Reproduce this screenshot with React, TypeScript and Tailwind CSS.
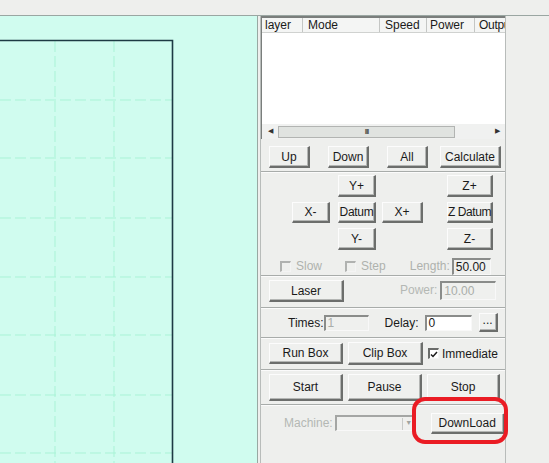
import type { ReactNode } from 'react';

const FONT = { fontFamily: '"Liberation Sans", Arial, sans-serif' };

function Btn({ children, className = '' }: { children: ReactNode; className?: string }) {
  return (
    <div
      className={`flex items-center justify-center whitespace-nowrap border-t border-l border-r-2 border-b-2 border-t-[#fcfcfc] border-l-[#fcfcfc] border-r-[#6c6e6c] border-b-[#6c6e6c] bg-[#eff0ee] text-[12px] leading-none text-[#1a1a1a] shadow-[inset_-1px_-1px_0_#b4b6b4] ${className}`}
    >
      {children}
    </div>
  );
}

function Field({ value, className = '', white = false, dim = false }: { value: string; className?: string; white?: boolean; dim?: boolean }) {
  return (
    <div
      className={`flex items-center border-t-2 border-l-2 border-r border-b border-t-[#8a8c8a] border-l-[#8a8c8a] border-r-[#f8f8f8] border-b-[#f8f8f8] pl-[2px] text-[12px] leading-none ${white ? 'bg-white' : 'bg-[#eff0ee]'} ${dim ? 'text-[#a9ada9]' : 'text-[#1a1a1a]'} ${className}`}
    >
      {value}
    </div>
  );
}

function Check({ checked = false, disabled = false }: { checked?: boolean; disabled?: boolean }) {
  return (
    <div
      className={`flex h-[11px] w-[11px] items-center justify-center border-t-2 border-l-2 border-r border-b ${disabled ? 'border-t-[#b0b2b0] border-l-[#b0b2b0] border-r-[#f4f4f4] border-b-[#f4f4f4] bg-[#eff0ee]' : 'border-t-[#6a6c6a] border-l-[#6a6c6a] border-r-[#f4f4f4] border-b-[#f4f4f4] bg-white'}`}
    >
      {checked ? (
        <svg width="8" height="7" viewBox="0 0 8 7">
          <path d="M1 3.5 L3 5.5 L7 1" stroke="#1a1a1a" strokeWidth="1.5" fill="none" />
        </svg>
      ) : null}
    </div>
  );
}

function Section({ children, className = '' }: { children: ReactNode; className?: string }) {
  return <div className={`border-b border-[#a8acaa] shadow-[0_1px_0_#fbfbfb] ${className}`}>{children}</div>;
}

function CanvasDrawing() {
  const rows = [84, 142, 202, 261, 319, 379, 437];
  return (
    <svg width="257" height="447" className="block">
      {rows.map((y) => (
        <line key={y} x1="0" y1={y} x2="172" y2={y} stroke="#a9f3d6" strokeWidth="1" strokeDasharray="11 4" />
      ))}
      {[55, 114].map((x) => (
        <line key={x} x1={x} y1="25" x2={x} y2="447" stroke="#a9f3d6" strokeWidth="1" strokeDasharray="11 4" />
      ))}
      <path d="M0 24.5 H172.5 V447" stroke="#1d3a44" strokeWidth="1.6" fill="none" />
    </svg>
  );
}

export default function App() {
  return (
    <div className="relative h-[463px] w-[549px] overflow-hidden bg-[#eeefed]" style={FONT}>
      <div className="h-[16px] border-b border-[#9aa6a2]" />
      <div className="flex h-[447px]">
        <div className="w-[258px] border-r border-[#98a8a2] bg-[#d0fcef]">
          <CanvasDrawing />
        </div>

        <div className="flex w-[291px] flex-col pl-[2px]">
          <div className="flex w-[246px] flex-1 flex-col border-l border-r border-[#b8bcba]">
            <div className="h-[108px] border-t-2 border-l border-[#7a7e7c] bg-white">
              <div className="flex h-[15px] border-b border-[#d0d2d0] bg-[#f4f5f4] text-[12px] leading-[15px] text-[#1a1a1a]">
                <div className="w-[41px] border-r border-[#c4c6c4] pl-[3px]">layer</div>
                <div className="w-[77px] border-r border-[#c4c6c4] pl-[5px]">Mode</div>
                <div className="w-[47px] border-r border-[#c4c6c4] pl-[5px]">Speed</div>
                <div className="w-[48px] border-r border-[#c4c6c4] pl-[3px]">Power</div>
                <div className="min-w-0 flex-1 overflow-hidden whitespace-nowrap pl-[4px] tracking-[-0.3px]">Outpu</div>
              </div>
            </div>
            <div className="flex h-[15px] items-center border-l border-[#7a7e7c] bg-[#f0f1f0]">
              <div className="flex w-[16px] justify-center text-[7px] text-[#333]">◀</div>
              <div className="flex h-[12px] w-[177px] items-center justify-center border border-[#b2b4b2] bg-[#e0e3e0] text-[8px] font-bold tracking-[-1px] text-[#555]">
                III
              </div>
              <div className="flex-1" />
              <div className="flex w-[16px] justify-center text-[7px] text-[#333]">▶</div>
            </div>

            <Section className="flex h-[33px] items-start pt-[7px]">
              <Btn className="ml-[8px] h-[22px] w-[41px]">Up</Btn>
              <Btn className="ml-[18px] h-[22px] w-[41px]">Down</Btn>
              <Btn className="ml-[18px] h-[22px] w-[41px]">All</Btn>
              <Btn className="ml-[12px] h-[22px] w-[61px]">Calculate</Btn>
            </Section>

            <Section className="h-[104px] pt-[3px]">
              <div className="grid grid-cols-[38px_8px_38px_6px_41px_24px_46px] grid-rows-[22px_21px_22px] gap-y-[5px] pl-[31px]">
                <Btn className="col-start-3 row-start-1">Y+</Btn>
                <Btn className="col-start-7 row-start-1">Z+</Btn>
                <Btn className="col-start-1 row-start-2">X-</Btn>
                <Btn className="col-start-3 row-start-2 tracking-[-0.3px]">Datum</Btn>
                <Btn className="col-start-5 row-start-2">X+</Btn>
                <Btn className="col-start-7 row-start-2 tracking-[-0.4px]">Z Datum</Btn>
                <Btn className="col-start-3 row-start-3">Y-</Btn>
                <Btn className="col-start-7 row-start-3">Z-</Btn>
              </div>
              <div className="mt-[7px] flex items-center text-[12px] text-[#aeb2ae]">
                <div className="ml-[19px]">
                  <Check disabled />
                </div>
                <span className="ml-[5px]">Slow</span>
                <div className="ml-[23px]">
                  <Check disabled />
                </div>
                <span className="ml-[5px]">Step</span>
                <span className="ml-[24px]">Length:</span>
                <Field value="50.00" className="ml-[2px] h-[17px] w-[39px]" />
              </div>
            </Section>

            <Section className="flex h-[32px] items-start pt-[4px]">
              <Btn className="ml-[8px] h-[22px] w-[75px]">Laser</Btn>
              <span className="ml-[56px] mt-[4px] text-[12px] leading-none text-[#b4b8b4]">Power:</span>
              <Field value="10.00" dim className="ml-[3px] mt-[1px] h-[19px] w-[56px]" />
            </Section>

            <Section className="flex h-[30px] items-center">
              <span className="ml-[27px] text-[12px] text-[#1a1a1a]">Times:</span>
              <Field value="1" dim className="ml-0 h-[16px] w-[45px]" />
              <span className="ml-[16px] text-[12px] text-[#1a1a1a]">Delay:</span>
              <Field value="0" white className="ml-[6px] h-[16px] w-[47px]" />
              <Btn className="ml-[7px] h-[19px] w-[19px] pb-[4px]">...</Btn>
            </Section>

            <Section className="flex h-[32px] items-center">
              <Btn className="ml-[8px] h-[21px] w-[74px]">Run Box</Btn>
              <Btn className="ml-[5px] h-[23px] w-[75px]">Clip Box</Btn>
              <div className="ml-[5px]">
                <Check checked />
              </div>
              <span className="ml-[3px] text-[12px] text-[#1a1a1a]">Immediate</span>
            </Section>

            <Section className="flex h-[35px] items-center">
              <Btn className="ml-[8px] h-[27px] w-[74px]">Start</Btn>
              <Btn className="ml-[5px] h-[27px] w-[74px]">Pause</Btn>
              <Btn className="ml-[5px] h-[27px] w-[73px]">Stop</Btn>
            </Section>

            <div className="flex h-[36px] items-center">
              <span className="ml-[23px] text-[12px] text-[#b4b8b4]">Machine:</span>
              <div className="ml-[2px] flex h-[16px] w-[81px] items-center justify-end border-t-2 border-l-2 border-r border-b border-t-[#a4a6a4] border-l-[#a4a6a4] border-r-[#f8f8f8] border-b-[#f8f8f8] bg-[#eff0ee]">
                <div className="flex h-[12px] w-[13px] items-center justify-center border-l border-[#c8cac8] text-[7px] text-[#a0a4a0]">▼</div>
              </div>
              <Btn className="ml-[15px] h-[21px] w-[74px]">DownLoad</Btn>
            </div>
          </div>
        </div>
      </div>

      <div className="absolute left-[412px] top-[397px] h-[47px] w-[96px] rounded-[13px] border-[4px] border-[#ea1c24]" />
    </div>
  );
}
